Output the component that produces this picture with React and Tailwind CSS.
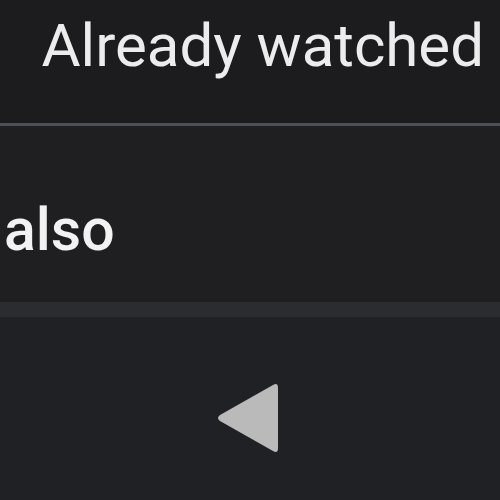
export default function App() {
  return (
    <div className="w-[500px] h-[500px] overflow-hidden flex flex-col bg-[#202124]" style={{ fontFamily: "Roboto, 'Noto Sans', sans-serif" }}>
      <div className="h-[123px] shrink-0 bg-[#1c1b1d] flex justify-end items-start pr-[16px] pt-[10px]">
        <span className="text-[60px] leading-[72px] text-[#ececec]">Already watched</span>
      </div>
      <div className="h-[3px] shrink-0 bg-[#485157]" />
      <div className="h-[176px] shrink-0 bg-[#1f1e20] flex items-start pl-[4px] pt-[68px]">
        <span className="text-[59px] leading-[72px] font-medium text-[#f2f2f2]">also</span>
      </div>
      <div className="h-[15px] shrink-0 bg-[#2b2c30]" />
      <div className="flex-1 bg-[#202124] flex justify-center items-start pt-[65px]">
        <svg width="64" height="72" viewBox="0 0 64 72" className="ml-[-4px]">
          <path d="M57 3 Q62 0 62 6 L62 66 Q62 72 57 69 L4 39 Q0 36 4 33 Z" fill="#bababa" />
        </svg>
      </div>
    </div>
  );
}
